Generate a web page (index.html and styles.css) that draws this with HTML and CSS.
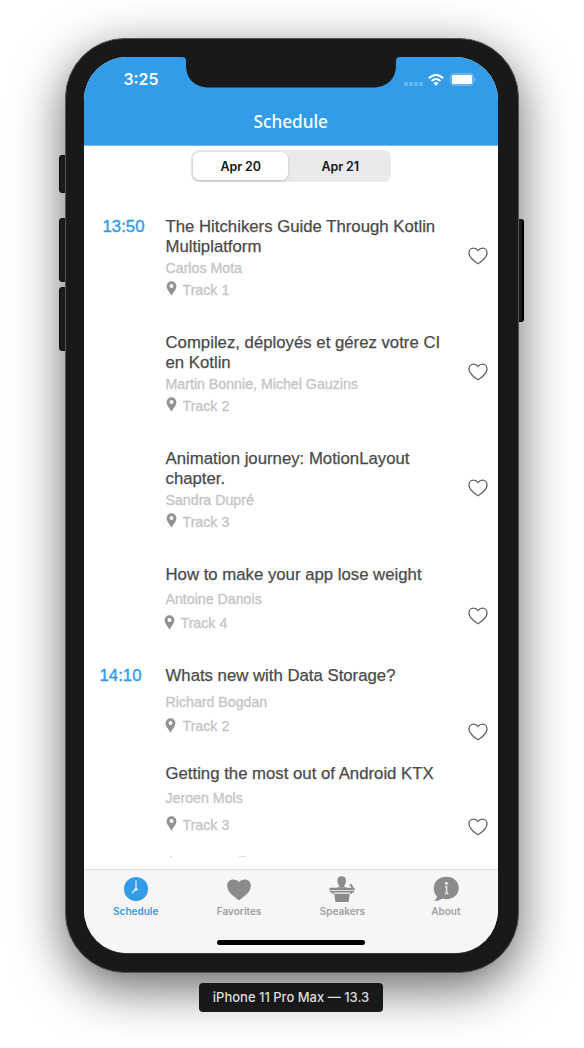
FILE: index.html
```html
<!DOCTYPE html>
<html lang="en">
<head>
<meta charset="utf-8">
<title>Schedule</title>
<link rel="stylesheet" href="styles.css">
</head>
<body>
<svg class="defs" width="0" height="0" aria-hidden="true">
  <symbol id="heart" viewBox="0 0 20 18"><path d="M10 16.800C7.400 14.800 1 11.300 1 5.900 1 3 3 1.100 5.500 1.100 7.500 1.100 9.200 2.200 10 3.500 10.800 2.200 12.500 1.100 14.500 1.100 17 1.100 19 3 19 5.900 19 11.300 12.600 14.800 10 16.800Z"/></symbol>
  <symbol id="pin" viewBox="0 0 10 15"><path fill-rule="evenodd" d="M5 .2A4.900 4.900 0 0 0 .1 5.100C.1 8.600 3.200 11.500 5 14.800 6.800 11.500 9.900 8.600 9.900 5.100A4.900 4.900 0 0 0 5 .2ZM5 3.100a2 2 0 1 1 0 4 2 2 0 0 1 0-4Z"/></symbol>
</svg>
<main class="stage">
  <div class="phone">
    <i class="key key-mute"></i><i class="key key-up"></i><i class="key key-down"></i><i class="key key-power"></i>
    <div class="screen">
      <svg class="notch" viewBox="0 0 218 31"><path d="M0 0H218Q214 0 214 4V8C214 22 205 30.500 191 30.500H27C13 30.500 4 22 4 8V4Q4 0 0 0Z"/></svg>
      <header class="top">
        <div class="status">
          <span class="clock">3:25</span>
          <span class="signals">
            <svg width="20" height="4" viewBox="0 0 20 4" fill="#fff" opacity=".25"><rect x="0" y="0" width="4" height="4" rx="1"/><rect x="5" y="0" width="4" height="4" rx="1"/><rect x="10" y="0" width="4" height="4" rx="1"/><rect x="15" y="0" width="4" height="4" rx="1"/></svg>
            <svg class="wifi" width="16" height="12" viewBox="0 0 16 12"><g fill="none" stroke="#fff" stroke-width="2"><path d="M.8 4.300Q8-2.300 15.200 4.300"/><path d="M3.500 7Q8 3 12.500 7"/></g><path fill="#fff" d="M5.500 9.200Q8 7 10.500 9.200L8 11.700Z"/></svg>
            <svg class="battery" width="26" height="13" viewBox="0 0 26 13"><rect x=".5" y=".5" width="23" height="12" rx="3" fill="#fff" fill-opacity=".2" stroke="#fff" stroke-opacity=".2"/><rect x="2" y="2" width="20" height="9" rx="1.500" fill="#fff"/><path d="M24.700 4.500q1.600 2 0 4z" fill="#fff" opacity=".5"/></svg>
          </span>
        </div>
        <h1 class="title">Schedule</h1>
      </header>
      <div class="segments"><span class="segment active">Apr 20</span><span class="segment">Apr 21</span></div>
      <section class="list">
        <article class="talk">
          <time class="time">13:50</time>
          <div class="info"><h2>The Hitchikers Guide Through Kotlin<br>Multiplatform</h2><p class="author">Carlos Mota</p><p class="track"><svg class="pin"><use href="#pin"/></svg>Track 1</p></div>
          <svg class="like"><use href="#heart"/></svg>
        </article>
        <article class="talk">
          <time class="time"></time>
          <div class="info"><h2>Compilez, déployés et gérez votre CI<br>en Kotlin</h2><p class="author">Martin Bonnie, Michel Gauzins</p><p class="track"><svg class="pin"><use href="#pin"/></svg>Track 2</p></div>
          <svg class="like"><use href="#heart"/></svg>
        </article>
        <article class="talk">
          <time class="time"></time>
          <div class="info"><h2>Animation journey: MotionLayout<br>chapter.</h2><p class="author">Sandra Dupré</p><p class="track"><svg class="pin"><use href="#pin"/></svg>Track 3</p></div>
          <svg class="like"><use href="#heart"/></svg>
        </article>
        <article class="talk talk-short">
          <time class="time"></time>
          <div class="info"><h2>How to make your app lose weight</h2><p class="author">Antoine Danois</p><p class="track"><svg class="pin"><use href="#pin"/></svg>Track 4</p></div>
          <svg class="like"><use href="#heart"/></svg>
        </article>
        <article class="talk talk-storage">
          <time class="time">14:10</time>
          <div class="info"><h2>Whats new with Data Storage?</h2><p class="author">Richard Bogdan</p><p class="track"><svg class="pin"><use href="#pin"/></svg>Track 2</p></div>
          <svg class="like"><use href="#heart"/></svg>
        </article>
        <article class="talk talk-last">
          <time class="time"></time>
          <div class="info"><h2>Getting the most out of Android KTX</h2><p class="author">Jeroen Mols</p><p class="track"><svg class="pin"><use href="#pin"/></svg>Track 3</p></div>
          <svg class="like"><use href="#heart"/></svg>
        </article>
        <div class="cutoff"><i></i><i></i></div>
      </section>
      <nav class="tabs">
        <a class="tab current"><svg width="26" height="26" viewBox="0 0 26 26"><circle cx="13" cy="13" r="12" fill="#329ce9"/><path d="M13 4.500V13L9 17" fill="none" stroke="#d9effd" stroke-width="1.300"/><circle cx="13" cy="13.300" r="1.600" fill="#d9effd"/></svg>Schedule</a>
        <a class="tab"><svg width="26" height="26" viewBox="0 0 26 26"><path d="M13 24.300C9.500 21.300 1.200 17 1.200 9.700 1.200 6 3.800 3.600 7 3.600c2.600 0 4.800 1 6 2.500 1.200-1.500 3.400-2.500 6-2.500 3.200 0 5.800 2.400 5.800 6.100C24.800 17 16.500 21.300 13 24.300Z"/></svg>Favorites</a>
        <a class="tab"><svg width="26" height="26" viewBox="0 0 26 26"><path d="M12.700.3c2.700 0 4.300 1.500 4.300 4.200 0 2.300-.8 3.900-1.700 4.900v1.200l2.700 1.200H7.500l2.700-1.200V9.400C9.200 8.400 8.400 6.800 8.400 4.500c0-2.700 1.600-4.200 4.300-4.200Z"/><path d="M.5 11.800h25v2.400H.5zM.7 14.900h24.600l-.6 1.700h-1.900v1.300h-1.500v-1.300H4.700v1.300H3.200v-1.300H1.300zM5.200 17.700h15.600l-1.300 8.200H6.500z"/><path d="M22 9l1.700 2.800M20.900 8.700l1.600 1" fill="none" stroke="#8b8b8b" stroke-width="2"/></svg>Speakers</a>
        <a class="tab"><svg width="26" height="26" viewBox="0 0 26 26"><path d="M13.300.8c7.200 0 12.500 4.800 12.500 11.200s-5.300 11.200-12.500 11.200c-1.500 0-2.800-.2-4.100-.6-2 1.700-4.600 2.500-8.300 2.500 1.900-1.500 2.800-2.700 3.100-4.700C1.800 18.300.8 15.500.8 12 .8 5.600 6.100.8 13.300.8Z"/><circle cx="13.400" cy="7.500" r="1.400" fill="#f2f2f2"/><path d="M12 10.700h1.600v6.800M11.800 17.400h3.600" fill="none" stroke="#e6e6e6" stroke-width="1.500"/></svg>About</a>
        <i class="home"></i>
      </nav>
    </div>
  </div>
  <div class="device">iPhone 11 Pro Max — 13.3</div>
</main>
</body>
</html>
```
FILE: styles.css
```css
* { box-sizing: border-box; }
body { margin: 0; background: #fff; font-family: "Liberation Sans", Arial, sans-serif; }
h1, h2, p { margin: 0; font-weight: 400; }
.defs { position: absolute; }
.stage { width: 584px; height: 1048px; padding: 37.5px 0 0 65px; overflow: hidden; }
.phone { position: relative; width: 453.500px; height: 935.500px; padding: 18px 20px 19.500px 18px; border-radius: 60px; background: #191919; border: 1px solid #555; box-shadow: 0 15px 50px rgba(0,0,0,.6); }
.screen { position: relative; display: flex; flex-direction: column; width: 100%; height: 100%; overflow: hidden; border-radius: 43px; background: #fff; box-shadow: 0 1px 0 #3a3a3a; }
.key { position: absolute; z-index: -1; width: 8px; background: #252525; border: 1px solid #111; border-radius: 3px; }
.key-mute { left: -7px; top: 116px; height: 38px; }
.key-up { left: -7px; top: 179px; height: 64px; }
.key-down { left: -7px; top: 248px; height: 64px; }
.key-power { right: -6px; top: 180px; height: 103px; border-right: 2px solid #000; }
.notch { position: absolute; left: 98px; top: 0; width: 218px; height: 31px; fill: #191919; }
.top { height: 89px; flex: none; background: #329ce9; color: #fff; border-bottom: 1px solid #7ab8e3; }
.status { height: 46px; display: flex; justify-content: space-between; align-items: center; padding: 0 21.500px 0 39.500px; }
.clock { font: 600 15.800px/20px Inter, sans-serif; }
.signals { display: flex; align-items: center; }
.signals svg:first-child { margin-top: 8px; }
.wifi { margin: 0 6px 0 4px; }
.title { font: 500 17.200px/24px "Noto Sans", sans-serif; text-align: center; margin-top: 7px; }
.segments { flex: none; display: flex; width: 200px; height: 32px; margin: 4px auto 0; padding: 2px; border-radius: 8px; background: #eaeaeb; }
.segment { flex: 1; text-align: center; font: 600 12.500px/29px Inter, sans-serif; color: #151515; padding-left: 4px; letter-spacing: -.1px; }
.segment.active { padding-left: 1px; background: #fff; border-radius: 6.500px; flex: 0 0 95px; box-shadow: 0 1px 3px rgba(0,0,0,.2); }
.list { flex: 1; min-height: 0; padding-top: 35px; overflow: hidden; }
.talk { height: 116.200px; display: grid; grid-template-columns: 66.500px 1fr 20px; padding: 0 10px 0 15px; align-items: start; }
.time { padding-left: 3.500px; font-size: 16.800px; line-height: 20px; color: #329ce9; -webkit-text-stroke: .4px #329ce9; }
.info { min-width: 0; }
h2 { font-size: 16.750px; line-height: 20px; color: #4a4a4a; white-space: nowrap; -webkit-text-stroke: .25px #4a4a4a; }
.author, .track { font-size: 14.200px; line-height: 18px; color: #c6c6c6; -webkit-text-stroke: .35px #c6c6c6; }
.author { margin-top: 2px; }
.track { margin-top: 4px; display: flex; align-items: center; }
.pin { width: 11px; height: 15px; margin: -2px 5.500px 0 .5px; fill: #929292; stroke: none; }
.like { width: 20px; height: 18px; margin-top: 30.500px; fill: none; stroke: #606060; stroke-width: 1.300; }
.talk-short { height: 101px; }
.talk-short .author { margin-top: 5px; }
.talk-short .track { margin: 6px 0 0 -2px; }
.talk-short .like { margin-top: 42px; }
.talk-storage { height: 98px; }
.talk-storage .time { padding-left: .5px; }
.talk-storage .author { margin-top: 7px; }
.talk-storage .track { margin-top: 6px; }
.talk-storage .pin { margin-left: -.5px; margin-right: 6.500px; }
.talk-storage .like { margin-top: 57px; }
.talk-last { height: 92px; }
.talk-last .author { margin-top: 5px; }
.talk-last .track { margin-top: 8.500px; }
.talk-last .like { margin-top: 54px; }
.cutoff { display: flex; gap: 67px; padding-left: 86px; }
.cutoff i { width: 2px; height: 1px; background: #ddd; }
.cutoff i + i { width: 7px; }
.tabs { position: relative; flex: none; height: 84px; display: flex; background: #f6f6f6; border-top: 1px solid #dedede; }
.tab { flex: 1; display: flex; flex-direction: column; align-items: center; padding-top: 6px; font: 600 10px/14px Inter, sans-serif; color: #a0a0a0; fill: #8b8b8b; }
.tab svg { margin-bottom: 2px; }
.tab.current { color: #329ce9; }
.home { position: absolute; left: 133px; bottom: 8px; width: 148px; height: 5px; border-radius: 3px; background: #000; }
.device { position: relative; width: 184px; height: 29px; margin: 10px 0 0 134px; border-radius: 4px; background: #191919; color: #dedede; text-align: center; font: 500 13px/29px Inter, sans-serif; }
```
